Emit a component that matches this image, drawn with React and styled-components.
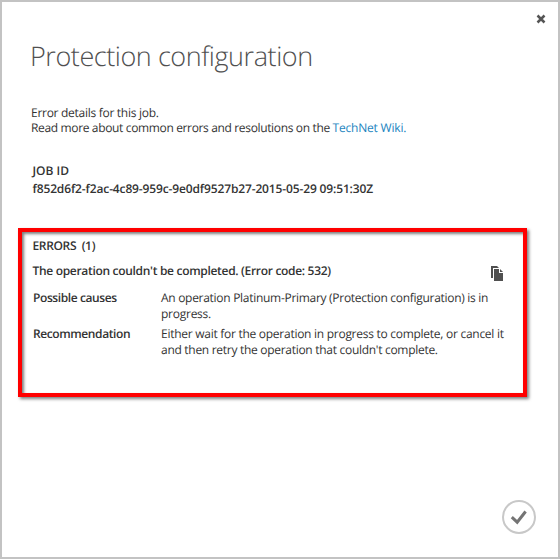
import React from "react";
import styled, { createGlobalStyle } from "styled-components";

const GlobalStyle = createGlobalStyle`
  *, *::before, *::after { box-sizing: border-box; }
  body { margin: 0; background: #fff; }
`;

const Dialog = styled.main`
  display: flex;
  flex-direction: column;
  width: 560px;
  height: 559px;
  border: 2px solid #c3c3c3;
  background: #fff;
  color: #333;
  font-family: "Open Sans", "Noto Sans", sans-serif;
  font-size: 12px;
  line-height: 16px;
  text-rendering: geometricPrecision;
`;

const TopBar = styled.div`
  display: flex;
  justify-content: flex-end;
  height: 35px;
  padding: 12px 12px 0 0;
`;

const IconButton = styled.button`
  display: block;
  height: ${({ $height }) => $height}px;
  margin-top: ${({ $drop = 0 }) => $drop}px;
  padding: 0;
  border: 0;
  background: none;
  cursor: pointer;

  svg { display: block; }
`;

const Title = styled.h1`
  height: 37px;
  margin: 0 0 0 28px;
  color: #505050;
  font-size: 27px;
  font-weight: 300;
  line-height: 37px;
  letter-spacing: -0.44px;
  white-space: nowrap;
`;

const Intro = styled.div`
  margin: 31px 0 0 29px;
  line-height: 15px;
`;

const Line = styled.p`
  margin: 0;
  letter-spacing: ${({ $tracking = -0.28 }) => $tracking}px;
  white-space: nowrap;
`;

const Link = styled.a`
  color: #1b84c0;
  letter-spacing: -0.2px;
  text-decoration: none;
`;

const Job = styled.section`
  display: flex;
  flex-direction: column;
  gap: 2px;
  margin: 28px 0 0 30.5px;
`;

const Strong = styled(Line)`
  font-weight: 600;
  white-space: pre;
`;

const ErrorPanel = styled.section`
  width: 509px;
  height: 169px;
  margin: 31px 0 0 16px;
  padding: 6px 10px 0 10.5px;
  border: 4px solid #f00;
  box-shadow: 2px 2px 3px rgba(0, 0, 0, 0.5), inset 2px 2px 3px rgba(0, 0, 0, 0.5);
`;

const Summary = styled.div`
  display: flex;
  justify-content: space-between;
  align-items: flex-start;
  height: 27px;
  margin-top: 9px;
  padding-right: 10px;
`;

const Details = styled.div`
  display: grid;
  grid-template-columns: 128px 1fr;
  row-gap: 4px;
  padding-left: 0.5px;
`;

const Footer = styled.footer`
  display: flex;
  justify-content: flex-end;
  margin-top: auto;
  padding: 0 22px 23px 0;
`;

function CloseIcon() {
  return (
    <svg width="10" height="10" viewBox="0 0 10 10">
      <path d="M1.5 1.5 8.5 8.5M8.5 1.5 1.5 8.5" fill="none" stroke="#555" strokeWidth="2.5" />
    </svg>
  );
}

function CopyIcon() {
  return (
    <svg width="12" height="15" viewBox="0 0 12 15">
      <path d="M0 0H6L8 2H2V12H0Z" fill="#505050" />
      <path d="M3 3H8V7H12V15H3Z" fill="#505050" />
      <path d="M9 3 12 6H9Z" fill="#505050" />
    </svg>
  );
}

function DoneIcon() {
  return (
    <svg width="34" height="34" viewBox="0 0 34 34">
      <circle cx="17" cy="17" r="16" fill="none" stroke="#c8c8c8" strokeWidth="2" />
      <path d="M9.8 17.2 15.2 22.2 23.6 11.5" fill="none" stroke="#747474" strokeWidth="3" />
    </svg>
  );
}

export default function App() {
  return (
    <>
      <GlobalStyle />
      <Dialog>
        <TopBar>
          <IconButton $height={10} aria-label="Close"><CloseIcon /></IconButton>
        </TopBar>
        <Title>Protection configuration</Title>
        <Intro>
          <Line>Error details for this job.</Line>
          <Line $tracking={-0.35}>
            Read more about common errors and resolutions on the <Link href="#">TechNet Wiki.</Link>
          </Line>
        </Intro>
        <Job>
          <Strong $tracking={0}>JOB ID</Strong>
          <Strong $tracking={-0.14}>f852d6f2-f2ac-4c89-959c-9e0df9527b27-2015-05-29 09:51:30Z</Strong>
        </Job>
        <ErrorPanel>
          <Strong $tracking={-0.35}>{"ERRORS  (1)"}</Strong>
          <Summary>
            <Strong $tracking={-0.31}>The operation couldn't be completed. (Error code: 532)</Strong>
            <IconButton $height={15} $drop={3} aria-label="Copy"><CopyIcon /></IconButton>
          </Summary>
          <Details>
            <Strong $tracking={-0.4}>Possible causes</Strong>
            <div>
              <Line $tracking={-0.29}>An operation Platinum-Primary (Protection configuration) is in</Line>
              <Line $tracking={-0.25}>progress.</Line>
            </div>
            <Strong $tracking={-0.4}>Recommendation</Strong>
            <div>
              <Line $tracking={-0.27}>Either wait for the operation in progress to complete, or cancel it</Line>
              <Line $tracking={-0.29}>and then retry the operation that couldn't complete.</Line>
            </div>
          </Details>
        </ErrorPanel>
        <Footer>
          <IconButton $height={34} aria-label="Done"><DoneIcon /></IconButton>
        </Footer>
      </Dialog>
    </>
  );
}
